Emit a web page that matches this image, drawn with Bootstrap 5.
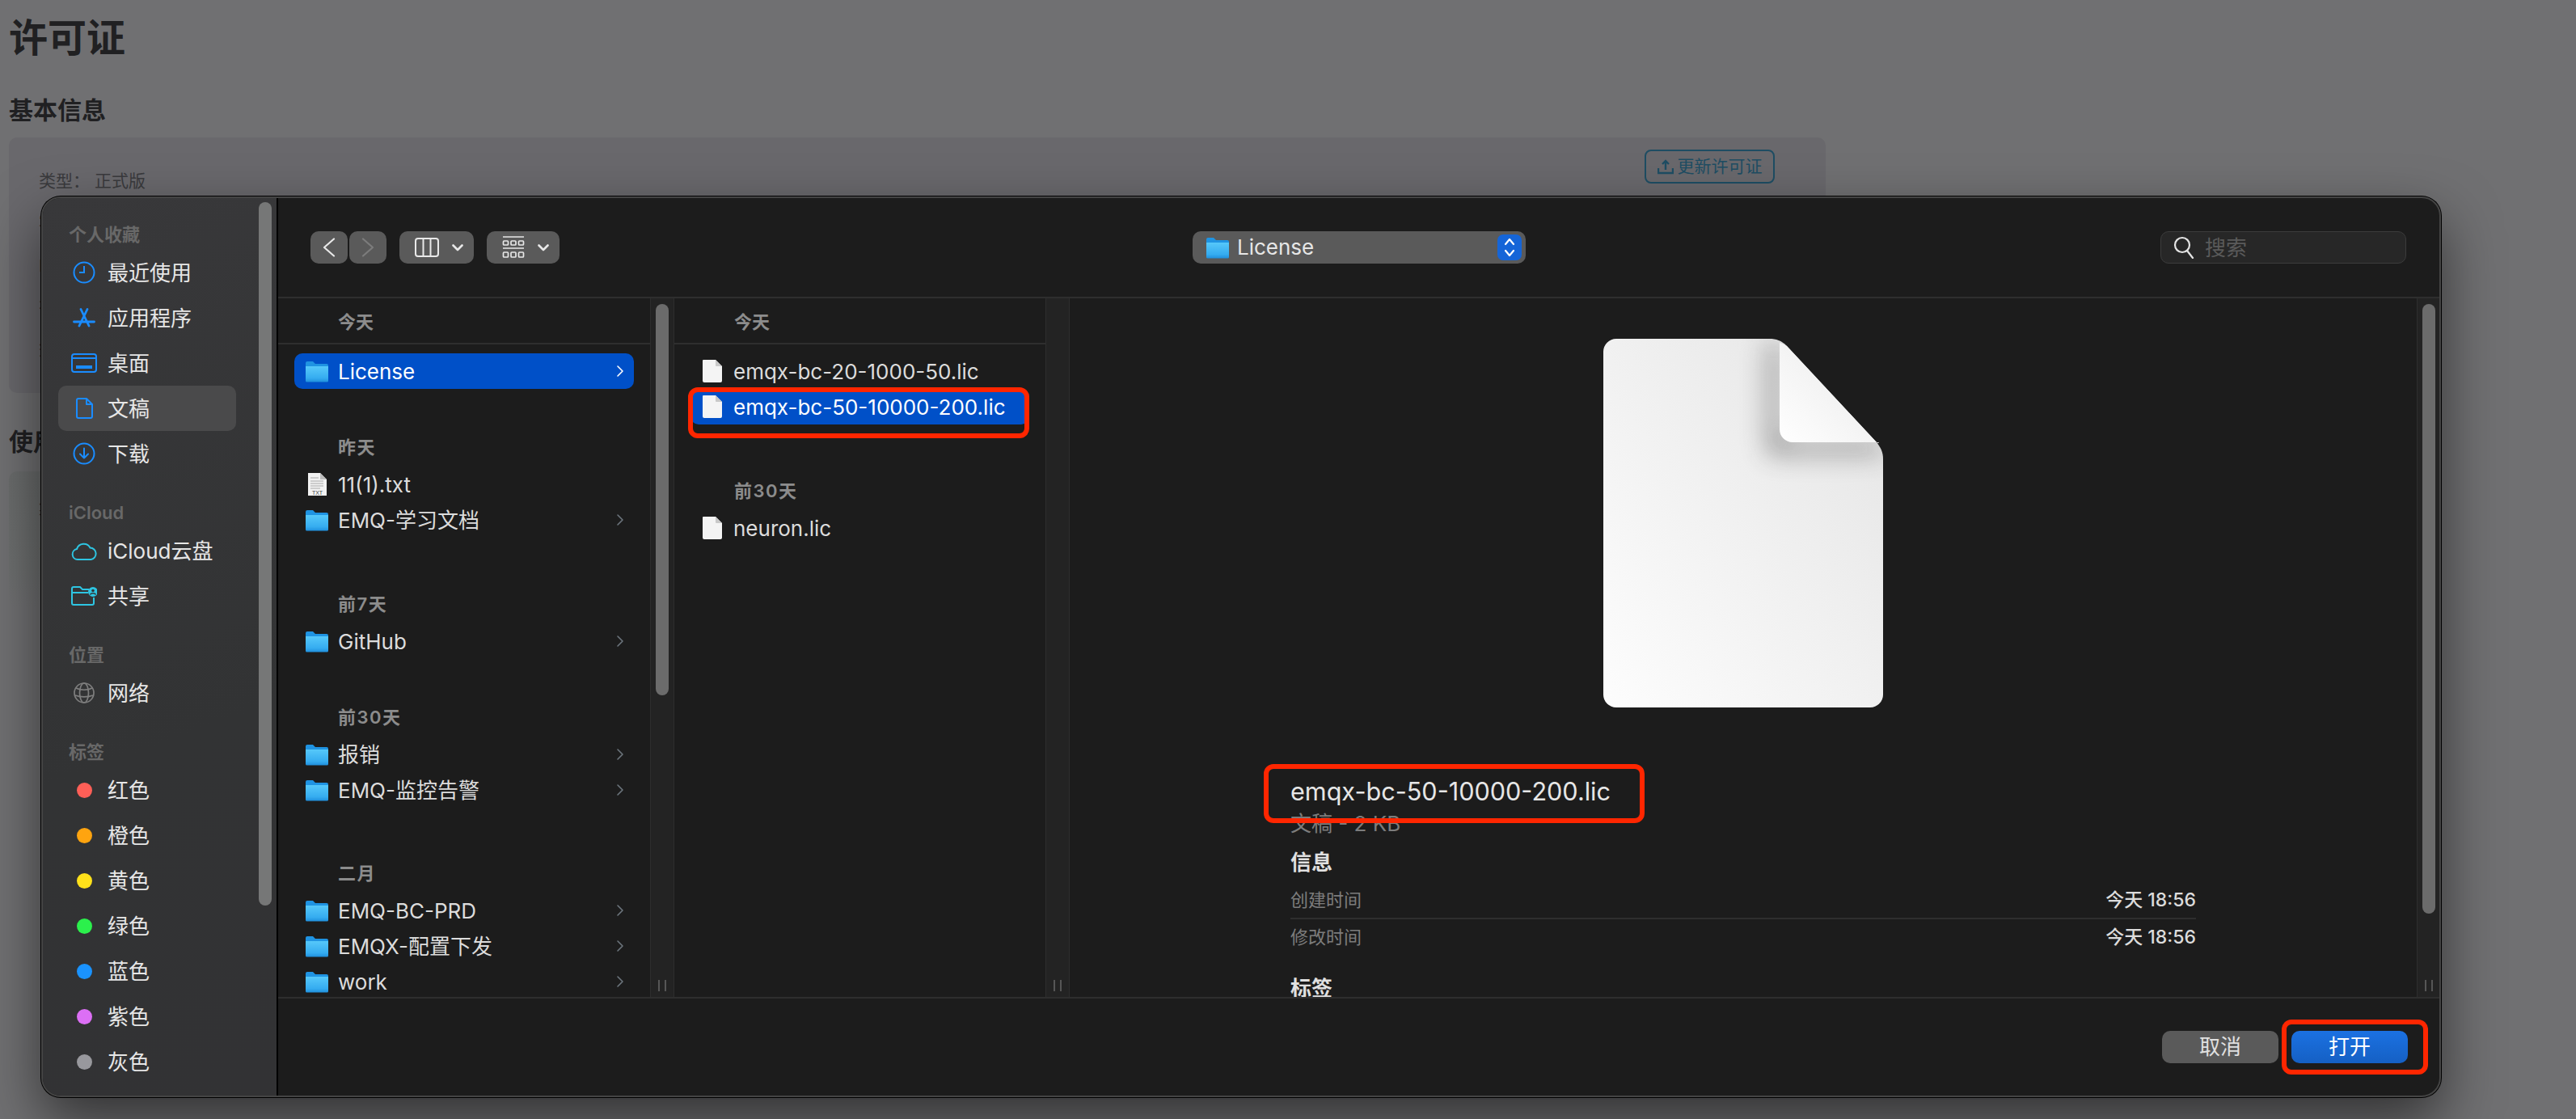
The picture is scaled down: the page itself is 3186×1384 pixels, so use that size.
<!DOCTYPE html>
<html lang="zh-CN">
<head>
    <meta charset="UTF-8">
    <title>许可证</title>
    <link href="https://cdn.jsdelivr.net/npm/bootstrap@5.3.2/dist/css/bootstrap.min.css" rel="stylesheet">
    <style>
        body {
            width: 3186px;
            height: 1384px;
            overflow: hidden;
            background: #707072;
            font-family: Inter, "Noto Sans CJK SC", sans-serif;
            color: #202022;
        }

        /* page behind the dialog */
        .back-page { padding: 18px 11px 0; }
        .back-page h1 { font-size: 48px; line-height: 58px; font-weight: 600; margin: 0; }
        .back-page h2 { font-size: 30px; line-height: 40px; font-weight: 600; margin: 0; }
        .back-title-1 { margin-top: 40px !important; }
        .back-title-2 { margin-top: 40px !important; }
        .back-panel { width: 2247px; background: #69686c; border-radius: 10px; margin-top: 14px; }
        .back-panel-1 { height: 316px; padding: 15px 63px 0 37px; }
        .back-panel-2 { height: 169px; padding: 30px 37px 0; background: linear-gradient(#6a6c6c, #6d6f6f 70%, #707072); margin-top: 17px; }
        .back-rows { padding-top: 24px; gap: 22px; font-size: 21px; line-height: 30px; color: #3a3a3d; }
        .back-btn {
            width: 161px; height: 42px; padding: 0; gap: 5px; font-size: 21px;
            color: #1e4d63; border: 2px solid #1e4d63; border-radius: 8px;
        }
        .back-big { font-size: 30px; font-weight: 600; line-height: 40px; margin-top: 10px; }

        /* dialog */
        .file-dialog {
            left: 51px; top: 243px; width: 2968px; height: 1114px;
            border: 2px solid #444;
            border-radius: 24px;
            overflow: hidden;
            background: #1c1c1c;
            box-shadow: 0 0 0 1px #000, 0 30px 70px rgba(0, 0, 0, .55);
        }
        .side-pane {
            width: 291px; flex: none; padding-top: 26px;
            background: linear-gradient(160deg, #38383a, #323334 60%, #323234);
            border-right: 2px solid #000;
        }
        .side-thumb { left: 267px; top: 5px; width: 16px; height: 870px; border-radius: 8px; background: #767777; }
        .side-head { height: 38px; margin-left: 32px; font-size: 22px; font-weight: 600; color: #686868; line-height: 38px; }
        .side-head-gap { margin-top: 26px; }
        .side-item { height: 56px; margin: 0 50px 0 19px; padding-left: 16px; border-radius: 10px; font-size: 26px; color: #e6e6e6; }
        .side-item.is-on { background: #4a4a4b; }
        .side-icon { width: 32px; flex: none; margin-right: 13px; display: flex; justify-content: center; }
        .tag-dot { width: 19px; height: 19px; border-radius: 50%; }

        .tool-bar { height: 124px; flex: none; padding-left: 40px; border-bottom: 2px solid #2e2e2e; }
        .tool-btn { height: 40px; background: #5a5a5a; border-radius: 10px; flex: none; }
        .tool-btn-gap { margin-left: 2px; }
        .tool-btn-wide { margin-left: 16px; padding-left: 19px; gap: 16px; }
        .path-pop { width: 412px; height: 40px; margin-left: 783px; padding: 0 5px 0 17px; background: #5a5a5a; border-radius: 10px; font-size: 26px; color: #e6e6e6; }
        .path-pop > svg { margin-right: 10px; }
        .path-label { position: relative; top: -1px; }
        .path-step { width: 30px; height: 32px; background: #1565d8; border-radius: 7px; }
        .search-box { width: 304px; height: 40px; margin-left: auto; margin-right: 43px; padding-left: 15px; gap: 13px; background: #272727; border: 1px solid #3c3c3c; border-radius: 10px; font-size: 26px; color: #5a5a5a; }

        .browse-area { height: 866px; flex: none; border-bottom: 2px solid #2e2e2e; overflow: hidden; }
        .list-col { overflow: hidden; flex: none; }
        .col-head { height: 57px; padding: 4px 0 0 74px; border-bottom: 2px solid #2e2e2e; margin-bottom: 11px; font-size: 22px; font-weight: 600; color: #8c8c8c; }
        .group-head { height: 47px; padding-left: 74px; font-size: 22px; font-weight: 600; color: #8c8c8c; letter-spacing: 1.5px; }
        .gap-near { margin-top: 49px; }
        .gap-far { margin-top: 59px; }
        .gap-far-b { margin-top: 58px; }
        .file-row { height: 44px; margin: 0 20px; padding: 0 12px 0 14px; border-radius: 10px; font-size: 26px; color: #dcdcdc; white-space: nowrap; }
        .file-row.is-on { background: #0050c8; color: #fff; }
        .file-row > svg:first-child { flex: none; margin-right: 12px; }
        .col-two .file-row { padding-left: 15px; }
        .col-two .file-row > svg:first-child { margin-right: 14px; }
        .col-two .group-head { margin-top: 59px; }
        .row-chevron { margin-left: auto; flex: none; }

        .col-track {
            flex: none; width: 30px; padding: 7px 0;
            background: #232323;
            border-left: 1px solid #2e2e2e; border-right: 1px solid #2e2e2e;
        }
        .track-thumb { width: 16px; border-radius: 8px; background: #6b6b6b; }

        .preview-pane { width: 1666px; flex: none; padding-top: 50px; overflow: hidden; }
        .preview-info { width: 1120px; margin: 84px auto 0; }
        .preview-name { font-size: 30.600px; line-height: 40px; color: #e6e6e6; }
        .preview-kind { font-size: 26px; line-height: 32px; color: #7c7c7c; margin-top: 4px; }
        .preview-sub { font-size: 26px; line-height: 32px; font-weight: 600; color: #e0e0e0; margin-top: 16px; }
        .preview-sub.tags-sub { margin-top: 26px; }
        .meta-row { height: 44px; font-size: 22px; color: #7c7c7c; }
        .meta-row-top { height: 46px; border-bottom: 2px solid #2e2e2e; margin-top: 8px; }
        .meta-row b { font-size: 23px; font-weight: 500; color: #dcdcdc; }

        .foot-bar { flex: 1; padding-right: 41px; gap: 16px; }
        .foot-btn { width: 144px; height: 40px; padding: 0; border: 0; border-radius: 10px; font-size: 26px; line-height: 40px; color: #e0e0e0; background: #5a5a5a; }
        .foot-btn-main { color: #fff; background: linear-gradient(#1b71e2, #1560c4); }

        /* red marks drawn on the screenshot */
        .red-mark { border: 6px solid #ff2600; border-radius: 12px; z-index: 5; }
        .red-mark-1 { left: 851px; top: 479px; width: 422px; height: 63px; }
        .red-mark-2 { left: 1563px; top: 945px; width: 471px; height: 73px; }
        .red-mark-3 { left: 2822px; top: 1261px; width: 181px; height: 68px; }

        .dot-red { background: #ff5f57; }
        .dot-orange { background: #ffa40f; }
        .dot-yellow { background: #ffe11a; }
        .dot-green { background: #2bf04c; }
        .dot-blue { background: #1a93ff; }
        .dot-purple { background: #dc6ff5; }
        .dot-gray { background: #98989d; }
    </style>
</head>
<body class="position-relative">

<!-- shared icons -->
<svg width="0" height="0" class="position-absolute">
    <defs>
        <linearGradient id="folderFill" x1="0" y1="0" x2="0" y2="1">
            <stop offset="0" stop-color="#56c8fa"/>
            <stop offset=".75" stop-color="#35acf0"/>
            <stop offset="1" stop-color="#1f8fdc"/>
        </linearGradient>
        <linearGradient id="bigPage" x1="0" y1="1" x2="1" y2="0">
            <stop offset="0" stop-color="#fdfdfd"/>
            <stop offset="1" stop-color="#e4e4e4"/>
        </linearGradient>
        <linearGradient id="bigFold" x1="0" y1="1" x2="1" y2="0">
            <stop offset="0" stop-color="#ffffff"/>
            <stop offset=".6" stop-color="#f1f1f1"/>
            <stop offset="1" stop-color="#dcdcdc"/>
        </linearGradient>
        <filter id="foldShadow" x="-40%" y="-40%" width="180%" height="180%">
            <feGaussianBlur stdDeviation="16"/>
        </filter>
        <symbol id="folder" viewBox="0 0 28 28">
            <path d="M0 4a2 2 0 0 1 2-2h7l3 3h14a2 2 0 0 1 2 2v4H0z" fill="#1f93e2"/>
            <path d="M0 8h28v18a1.500 1.500 0 0 1-1.500 1.500H1.500A1.500 1.500 0 0 1 0 26z" fill="url(#folderFill)"/>
        </symbol>
        <symbol id="page" viewBox="0 0 24 28">
            <path d="M1 0h15l8 8v18a2 2 0 0 1-2 2H2a2 2 0 0 1-2-2V1a1 1 0 0 1 1-1z" fill="#f4f4f4"/>
            <path d="M16 0l8 8h-7a1 1 0 0 1-1-1z" fill="#c9c9c9"/>
        </symbol>
        <symbol id="chev" viewBox="0 0 10 16">
            <path d="M2 2l6 6-6 6" fill="none" stroke="currentColor" stroke-width="1.600" stroke-linecap="round" stroke-linejoin="round"/>
        </symbol>
        <symbol id="chevDown" viewBox="0 0 14 9">
            <path d="M1.500 1.500L7 7l5.500-5.500" fill="none" stroke="#e8e8e8" stroke-width="2.600" stroke-linecap="round" stroke-linejoin="round"/>
        </symbol>
        <symbol id="grip" viewBox="0 0 10 14">
            <path d="M1 0v14M9 0v14" stroke="#565656" stroke-width="2"/>
        </symbol>
    </defs>
</svg>

<div class="back-page">
    <h1>许可证</h1>
    <h2 class="back-title-1">基本信息</h2>
    <div class="back-panel back-panel-1 d-flex justify-content-between align-items-start">
        <div class="back-rows d-flex flex-column">
            <div>类型： 正式版</div>
            <div>客户：</div>
            <div>邮箱：</div>
            <div>有效期：</div>
            <div>签发：</div>
        </div>
        <button class="btn back-btn d-flex align-items-center justify-content-center">
            <svg width="20" height="20" viewBox="0 0 20 20"><path d="M1 12v6h18v-6M10 14V3M6 7l4-4 4 4" fill="none" stroke="#1e4d63" stroke-width="2.400"/></svg>
            更新许可证
        </button>
    </div>
    <h2 class="back-title-2">使用情况</h2>
    <div class="back-panel back-panel-2">
        <div class="back-rows p-0">集群</div>
        <div class="back-big">50</div>
    </div>
</div>

<div class="file-dialog position-absolute d-flex">
    <aside class="side-pane position-relative">
        <div class="side-thumb position-absolute"></div>
        <div class="side-head">个人收藏</div>
        <div class="side-item d-flex align-items-center">
            <span class="side-icon"><svg width="28" height="28" viewBox="0 0 28 28" fill="none" stroke="#1a8cff" stroke-width="2"><circle cx="14" cy="14" r="12.500"/><path d="M14 6v8H8"/></svg></span>最近使用
        </div>
        <div class="side-item d-flex align-items-center">
            <span class="side-icon"><svg width="28" height="24" viewBox="0 0 28 24" fill="none" stroke="#1a8cff" stroke-width="2.800" stroke-linecap="round"><path d="M10 1.500L20 22M18 1.500L8 22M1.500 17h25"/></svg></span>应用程序
        </div>
        <div class="side-item d-flex align-items-center">
            <span class="side-icon"><svg width="32" height="24" viewBox="0 0 32 24" fill="none" stroke="#1a8cff" stroke-width="2"><rect x="1" y="1" width="30" height="22" rx="3"/><path d="M1 6h30"/><path d="M6 17h20" stroke-width="4"/></svg></span>桌面
        </div>
        <div class="side-item is-on d-flex align-items-center">
            <span class="side-icon"><svg width="22" height="26" viewBox="0 0 22 26" fill="none" stroke="#1a8cff" stroke-width="2" stroke-linejoin="round"><path d="M4 1h10l7 7v15a2 2 0 0 1-2 2H4a2 2 0 0 1-2-2V3a2 2 0 0 1 2-2z"/><path d="M14 1v7h7"/></svg></span>文稿
        </div>
        <div class="side-item d-flex align-items-center">
            <span class="side-icon"><svg width="28" height="28" viewBox="0 0 28 28" fill="none" stroke="#1a8cff" stroke-width="2" stroke-linecap="round" stroke-linejoin="round"><circle cx="14" cy="14" r="12.500"/><path d="M14 7.500v12M9 14.500l5 5 5-5"/></svg></span>下载
        </div>

        <div class="side-head side-head-gap">iCloud</div>
        <div class="side-item d-flex align-items-center">
            <span class="side-icon"><svg width="32" height="23" viewBox="0 0 32 23" fill="none" stroke="#2ec5e2" stroke-width="2"><path d="M8 22a6.500 6.500 0 0 1-1-12.900A9 9 0 0 1 23.500 7.500 7.300 7.300 0 0 1 24.500 22z"/></svg></span>iCloud云盘
        </div>
        <div class="side-item d-flex align-items-center">
            <span class="side-icon"><svg width="32" height="24" viewBox="0 0 32 24" fill="none" stroke="#2ec5e2" stroke-width="2"><path d="M28 14v7a2 2 0 0 1-2 2H3a2 2 0 0 1-2-2V3a2 2 0 0 1 2-2h8l3 3h8M1 8h20"/><circle cx="27" cy="7" r="5" fill="#2ec5e2"/><circle cx="27" cy="5.500" r="1.800" fill="#323334" stroke="none"/><path d="M23.500 10.500c1-2.500 6-2.500 7 0" stroke="#323334" stroke-width="1.500"/></svg></span>共享
        </div>

        <div class="side-head side-head-gap">位置</div>
        <div class="side-item d-flex align-items-center">
            <span class="side-icon"><svg width="26" height="26" viewBox="0 0 26 26" fill="none" stroke="#7e7e7e" stroke-width="1.700"><circle cx="13" cy="13" r="12"/><ellipse cx="13" cy="13" rx="5.500" ry="12"/><path d="M3 7c5 3 15 3 20 0M2 16c6 2.500 16 2.500 22 0"/></svg></span>网络
        </div>

        <div class="side-head side-head-gap">标签</div>
        <div class="side-item d-flex align-items-center"><span class="side-icon"><span class="tag-dot dot-red"></span></span>红色</div>
        <div class="side-item d-flex align-items-center"><span class="side-icon"><span class="tag-dot dot-orange"></span></span>橙色</div>
        <div class="side-item d-flex align-items-center"><span class="side-icon"><span class="tag-dot dot-yellow"></span></span>黄色</div>
        <div class="side-item d-flex align-items-center"><span class="side-icon"><span class="tag-dot dot-green"></span></span>绿色</div>
        <div class="side-item d-flex align-items-center"><span class="side-icon"><span class="tag-dot dot-blue"></span></span>蓝色</div>
        <div class="side-item d-flex align-items-center"><span class="side-icon"><span class="tag-dot dot-purple"></span></span>紫色</div>
        <div class="side-item d-flex align-items-center"><span class="side-icon"><span class="tag-dot dot-gray"></span></span>灰色</div>
    </aside>

    <div class="d-flex flex-column flex-grow-1">
        <div class="tool-bar d-flex align-items-center">
            <div class="tool-btn d-flex align-items-center justify-content-center" style="width:46px">
                <svg width="16" height="24" viewBox="0 0 16 24"><path d="M14 1.500L2 12l12 10.500" fill="none" stroke="#e8e8e8" stroke-width="2.200" stroke-linecap="round" stroke-linejoin="round"/></svg>
            </div>
            <div class="tool-btn tool-btn-gap d-flex align-items-center justify-content-center" style="width:46px">
                <svg width="16" height="24" viewBox="0 0 16 24"><path d="M2 1.500L14 12 2 22.500" fill="none" stroke="#7c7c7c" stroke-width="2.200" stroke-linecap="round" stroke-linejoin="round"/></svg>
            </div>
            <div class="tool-btn tool-btn-wide d-flex align-items-center" style="width:92px">
                <svg width="30" height="24" viewBox="0 0 30 24" fill="none" stroke="#e8e8e8" stroke-width="2"><rect x="1" y="1" width="28" height="22" rx="3"/><path d="M10.500 1v22M19.500 1v22"/></svg>
                <svg width="14" height="9"><use href="#chevDown"/></svg>
            </div>
            <div class="tool-btn tool-btn-wide d-flex align-items-center" style="width:90px">
                <svg width="28" height="28" viewBox="0 0 28 28" fill="none" stroke="#e8e8e8" stroke-width="1.700"><path d="M1 1h26M1 15h26"/><rect x="1.500" y="6" width="6" height="5" rx="1"/><rect x="11" y="6" width="6" height="5" rx="1"/><rect x="20.500" y="6" width="6" height="5" rx="1"/><rect x="1.500" y="20" width="6" height="6" rx="1"/><rect x="11" y="20" width="6" height="6" rx="1"/><rect x="20.500" y="20" width="6" height="6" rx="1"/></svg>
                <svg width="14" height="9"><use href="#chevDown"/></svg>
            </div>
            <div class="path-pop d-flex align-items-center">
                <svg width="28" height="28"><use href="#folder"/></svg>
                <span class="path-label">License</span>
                <span class="path-step ms-auto d-flex align-items-center justify-content-center">
                    <svg width="16" height="26" viewBox="0 0 16 26" fill="none" stroke="#fff" stroke-width="2.200" stroke-linecap="round" stroke-linejoin="round"><path d="M3 9l5-6 5 6M3 17l5 6 5-6"/></svg>
                </span>
            </div>
            <div class="search-box d-flex align-items-center">
                <svg width="26" height="28" viewBox="0 0 26 28" fill="none" stroke="#e4e4e4" stroke-width="2.200"><circle cx="11" cy="11" r="9"/><path d="M17 18l7 9" stroke-linecap="round"/></svg>
                搜索
            </div>
        </div>

        <div class="browse-area d-flex">
            <div class="list-col col-one" style="width:460px">
                <div class="col-head d-flex align-items-center">今天</div>
                <div class="file-row is-on d-flex align-items-center">
                    <svg width="28" height="28"><use href="#folder"/></svg>License
                    <svg class="row-chevron text-white" width="10" height="16"><use href="#chev"/></svg>
                </div>

                <div class="group-head gap-near d-flex align-items-center">昨天</div>
                <div class="file-row d-flex align-items-center">
                    <svg width="28" height="28" viewBox="0 0 28 28">
                        <path d="M3 0h15l8 8v20H3z" fill="#f2f2f2"/><path d="M18 0l8 8h-8z" fill="#bdbdbd"/>
                        <path d="M6 6h10M6 10h16M6 13h16M6 16h16M6 19h12" stroke="#a8a8a8"/>
                        <text x="14.500" y="27" font-size="7" text-anchor="middle" fill="#444" font-family="Liberation Sans, sans-serif">TXT</text>
                    </svg>11(1).txt
                </div>
                <div class="file-row d-flex align-items-center">
                    <svg width="28" height="28"><use href="#folder"/></svg>EMQ-学习文档
                    <svg class="row-chevron text-secondary" width="10" height="16"><use href="#chev"/></svg>
                </div>

                <div class="group-head gap-far d-flex align-items-center">前7天</div>
                <div class="file-row d-flex align-items-center">
                    <svg width="28" height="28"><use href="#folder"/></svg>GitHub
                    <svg class="row-chevron text-secondary" width="10" height="16"><use href="#chev"/></svg>
                </div>

                <div class="group-head gap-near d-flex align-items-center">前30天</div>
                <div class="file-row d-flex align-items-center">
                    <svg width="28" height="28"><use href="#folder"/></svg>报销
                    <svg class="row-chevron text-secondary" width="10" height="16"><use href="#chev"/></svg>
                </div>
                <div class="file-row d-flex align-items-center">
                    <svg width="28" height="28"><use href="#folder"/></svg>EMQ-监控告警
                    <svg class="row-chevron text-secondary" width="10" height="16"><use href="#chev"/></svg>
                </div>

                <div class="group-head gap-far-b d-flex align-items-center">二月</div>
                <div class="file-row d-flex align-items-center">
                    <svg width="28" height="28"><use href="#folder"/></svg>EMQ-BC-PRD
                    <svg class="row-chevron text-secondary" width="10" height="16"><use href="#chev"/></svg>
                </div>
                <div class="file-row d-flex align-items-center">
                    <svg width="28" height="28"><use href="#folder"/></svg>EMQX-配置下发
                    <svg class="row-chevron text-secondary" width="10" height="16"><use href="#chev"/></svg>
                </div>
                <div class="file-row d-flex align-items-center">
                    <svg width="28" height="28"><use href="#folder"/></svg>work
                    <svg class="row-chevron text-secondary" width="10" height="16"><use href="#chev"/></svg>
                </div>
            </div>

            <div class="col-track d-flex flex-column justify-content-between align-items-center">
                <div class="track-thumb" style="height:484px"></div>
                <svg width="10" height="14"><use href="#grip"/></svg>
            </div>

            <div class="list-col col-two" style="width:459px">
                <div class="col-head d-flex align-items-center">今天</div>
                <div class="file-row d-flex align-items-center"><svg width="24" height="28"><use href="#page"/></svg>emqx-bc-20-1000-50.lic</div>
                <div class="file-row is-on d-flex align-items-center"><svg width="24" height="28"><use href="#page"/></svg>emqx-bc-50-10000-200.lic</div>
                <div class="group-head d-flex align-items-center">前30天</div>
                <div class="file-row d-flex align-items-center"><svg width="24" height="28"><use href="#page"/></svg>neuron.lic</div>
            </div>

            <div class="col-track d-flex flex-column justify-content-end align-items-center">
                <svg width="10" height="14"><use href="#grip"/></svg>
            </div>

            <div class="preview-pane">
                <svg class="d-block mx-auto" width="346" height="456" viewBox="0 0 346 456">
                    <path d="M16 0H205c9 0 15 2 22 9l110 118c6 7 9 13 9 22V440a16 16 0 0 1-16 16H16a16 16 0 0 1-16-16V16A16 16 0 0 1 16 0z" fill="url(#bigPage)"/>
                    <clipPath id="pageClip"><path d="M16 0H205c9 0 15 2 22 9l110 118c6 7 9 13 9 22V440a16 16 0 0 1-16 16H16a16 16 0 0 1-16-16V16A16 16 0 0 1 16 0z"/></clipPath>
                    <g clip-path="url(#pageClip)">
                        <path d="M218 4V112a16 16 0 0 0 16 16H346V142H204V4z" fill="#444" opacity=".6" filter="url(#foldShadow)"/>
                    </g>
                    <path d="M218 5c4 1 6 2 9 4l110 118c2 2 3 3 4 1H234a16 16 0 0 1-16-16z" fill="url(#bigFold)"/>
                </svg>
                <div class="preview-info">
                    <div class="preview-name">emqx-bc-50-10000-200.lic</div>
                    <div class="preview-kind">文稿 - 2 KB</div>
                    <div class="preview-sub">信息</div>
                    <div class="meta-row meta-row-top d-flex align-items-center justify-content-between"><span>创建时间</span><b>今天 18:56</b></div>
                    <div class="meta-row d-flex align-items-center justify-content-between"><span>修改时间</span><b>今天 18:56</b></div>
                    <div class="preview-sub tags-sub">标签</div>
                </div>
            </div>

            <div class="col-track flex-grow-1 d-flex flex-column justify-content-between align-items-center">
                <div class="track-thumb" style="height:754px"></div>
                <svg width="10" height="14"><use href="#grip"/></svg>
            </div>
        </div>

        <div class="foot-bar d-flex align-items-center justify-content-end">
            <button class="btn foot-btn">取消</button>
            <button class="btn foot-btn foot-btn-main">打开</button>
        </div>
    </div>
</div>

<div class="red-mark red-mark-1 position-absolute"></div>
<div class="red-mark red-mark-2 position-absolute"></div>
<div class="red-mark red-mark-3 position-absolute"></div>

<script src="https://cdn.jsdelivr.net/npm/bootstrap@5.3.2/dist/js/bootstrap.bundle.min.js"></script>
</body>
</html>
